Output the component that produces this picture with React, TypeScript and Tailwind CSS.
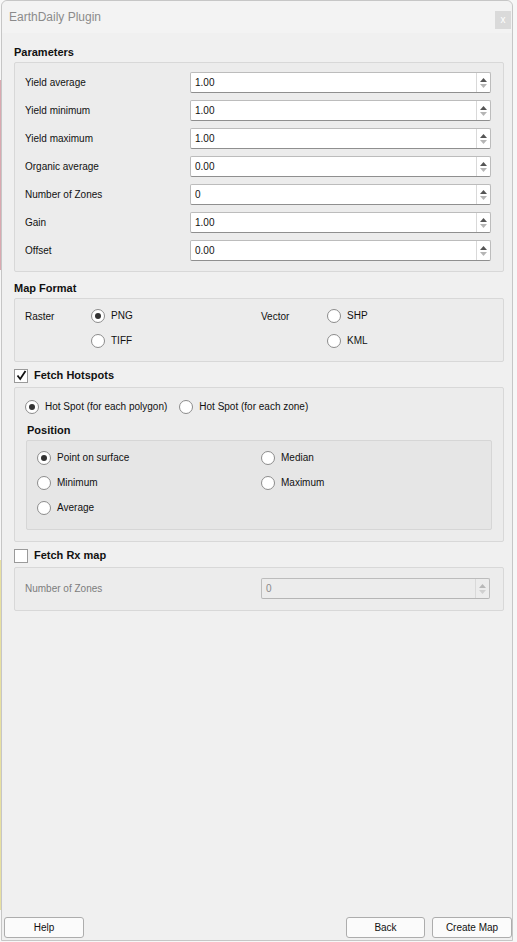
import React from 'react'

const font = { fontFamily: '"Liberation Sans", Arial, sans-serif' }

function Spin({ value, disabled = false, width }: { value: string; disabled?: boolean; width: string }) {
  return (
    <div
      className={`${width} h-[21px] flex rounded-[2px] border border-[#bcbcbc] border-b-[#8f8f8f] ${
        disabled ? 'bg-[#ececec] text-[#8a8a8a] border-b-[#b5b5b5]' : 'bg-white text-[#111]'
      }`}
    >
      <div className="flex-1 flex items-center pl-[4px] leading-none">{value}</div>
      <div className="w-[14px] border-l border-[#d9d9d9] flex flex-col items-center justify-center gap-[2px]">
        <svg width="7" height="4" viewBox="0 0 7 4">
          <path d="M3.5 0 L7 4 L0 4 Z" fill={disabled ? '#b8b8b8' : '#555'} />
        </svg>
        <svg width="7" height="4" viewBox="0 0 7 4">
          <path d="M0 0 L7 0 L3.5 4 Z" fill={disabled ? '#cfcfcf' : '#b5b5b5'} />
        </svg>
      </div>
    </div>
  )
}

function Radio({ label, checked = false }: { label: string; checked?: boolean }) {
  return (
    <div className="flex items-center h-[20px] gap-[6px]">
      <span className="w-[14px] h-[14px] rounded-full border border-[#8c8c8c] bg-white flex items-center justify-center">
        {checked && <span className="w-[6px] h-[6px] rounded-full bg-[#333]" />}
      </span>
      <span className="leading-none">{label}</span>
    </div>
  )
}

function Check({ label, checked }: { label: string; checked: boolean }) {
  return (
    <div className="h-[25px] flex items-center pt-[2px] gap-[6px] pl-[12px]">
      <span className="w-[14px] h-[14px] border border-[#9a9a9a] bg-white flex items-center justify-center">
        {checked && (
          <svg width="11" height="11" viewBox="0 0 11 11">
            <path d="M1.5 5.5 L4.2 9 L9.5 1" fill="none" stroke="#111" strokeWidth="1.8" />
          </svg>
        )}
      </span>
      <span className="font-bold leading-none text-[11px]">{label}</span>
    </div>
  )
}

const params = [
  ['Yield average', '1.00'],
  ['Yield minimum', '1.00'],
  ['Yield maximum', '1.00'],
  ['Organic average', '0.00'],
  ['Number of Zones', '0'],
  ['Gain', '1.00'],
  ['Offset', '0.00'],
]

const btn = 'h-[21px] border border-[#adadad] rounded-[3px] bg-[#fbfbfb] text-[10px] text-[#111]'

export default function App() {
  return (
    <div className="w-[517px] h-[942px] flex bg-[#f7f7f7] overflow-hidden text-[10px] text-[#111]" style={font}>
      {/* bits of the window behind */}
      <div className="w-[1px] flex flex-col">
        <div className="h-[80px]" />
        <div className="h-[190px] bg-[#d9a9b0]" />
        <div className="h-[290px]" />
        <div className="h-[350px] bg-[#e8e0a0]" />
      </div>

      <div className="w-[512px] h-[941px] border border-[#c6c6c6] rounded-t-[6px] bg-[#f0f0f0] flex flex-col">
        {/* title bar */}
        <div className="h-[32px] bg-[#f3f3f3] flex items-center pl-[7px] rounded-t-[6px]">
          <span className="text-[12px] text-[#8b8b8b]">EarthDaily Plugin</span>
          <div className="ml-auto mr-[1px] w-[16px] h-[18px] mt-[5px] bg-[#dadada] flex items-center justify-center text-white text-[10px] leading-none">
            x
          </div>
        </div>

        <div className="flex-1 flex flex-col pl-[12px] pr-[8px]">
          {/* Parameters */}
          <div className="pt-[13px] h-[29px] font-bold text-[11px] leading-[13px]">Parameters</div>
          <div className="border border-[#d8d8d8] rounded-[2px] bg-[#ececec] pt-[9px] pb-[10px] pl-[10px] pr-[11px] flex flex-col gap-[7px]">
            {params.map(([l, v]) => (
              <div key={l} className="flex items-center">
                <div className="w-[165px]">{l}</div>
                <Spin value={v} width="w-[301px]" />
              </div>
            ))}
          </div>

          {/* Map Format */}
          <div className="pt-[10px] h-[26px] font-bold text-[11px] leading-[13px]">Map Format</div>
          <div className="border border-[#d8d8d8] rounded-[2px] bg-[#ececec] pt-[7px] pb-[10px] pl-[10px] flex">
            <div className="w-[66px] h-[20px] flex items-center">Raster</div>
            <div className="w-[170px] flex flex-col gap-[5px]">
              <Radio label="PNG" checked />
              <Radio label="TIFF" />
            </div>
            <div className="w-[66px] h-[20px] flex items-center">Vector</div>
            <div className="flex flex-col gap-[5px]">
              <Radio label="SHP" />
              <Radio label="KML" />
            </div>
          </div>

          {/* Fetch Hotspots */}
          <div className="-ml-[12px]">
            <Check label="Fetch Hotspots" checked />
          </div>
          <div className="border border-[#d8d8d8] rounded-[2px] bg-[#ececec] pt-[9px] pb-[11px] px-[11px] flex flex-col">
            <div className="flex gap-[12px] -ml-[1px]">
              <Radio label="Hot Spot (for each polygon)" checked />
              <Radio label="Hot Spot (for each zone)" />
            </div>
            <div className="mt-[7px] h-[13px] leading-[13px] font-bold text-[11px] pl-[1px]">Position</div>
            <div className="mt-[3px] border border-[#d6d6d6] rounded-[2px] bg-[#e6e6e6] pt-[7px] pb-[11px] pl-[10px] grid grid-cols-[224px_1fr] gap-y-[5px]">
              <Radio label="Point on surface" checked />
              <Radio label="Median" />
              <Radio label="Minimum" />
              <Radio label="Maximum" />
              <Radio label="Average" />
            </div>
          </div>

          {/* Fetch Rx map */}
          <div className="-ml-[12px]">
            <Check label="Fetch Rx map" checked={false} />
          </div>
          <div className="border border-[#d8d8d8] rounded-[2px] bg-[#ececec] pt-[10px] pb-[11px] pl-[10px] flex items-center">
            <div className="w-[236px] text-[#7d7d7d]">Number of Zones</div>
            <Spin value="0" disabled width="w-[229px]" />
          </div>
        </div>

        {/* footer */}
        <div className="h-[21px] mb-[2px] flex pl-[2px]">
          <button className={`w-[80px] ${btn}`}>Help</button>
          <div className="flex-1" />
          <button className={`w-[79px] ${btn}`}>Back</button>
          <button className={`ml-[7px] w-[80px] ${btn}`}>Create Map</button>
        </div>
      </div>
    </div>
  )
}
